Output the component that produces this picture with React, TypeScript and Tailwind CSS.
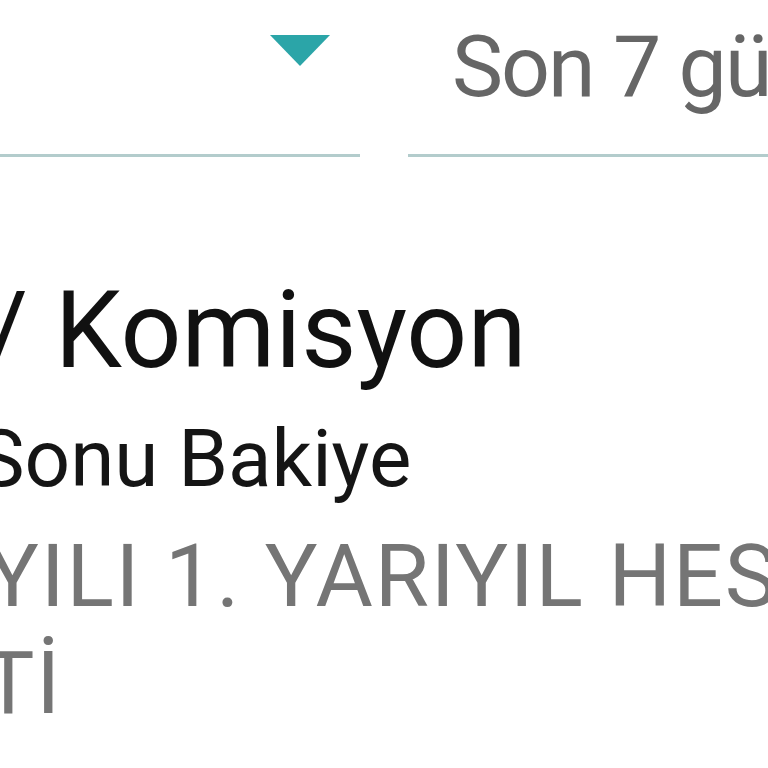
export default function App() {
  return (
    <div className="w-[768px] h-[768px] overflow-hidden bg-white" style={{ fontFamily: "Roboto, 'Noto Sans', sans-serif" }}>
      {/* filter row */}
      <div className="flex gap-[48px] w-[900px]">
        <div className="w-[360px] h-[157px] border-b-[3px] border-[#b3cccc] flex justify-end pr-[30px] pt-[35px]">
          <svg width="60" height="31" viewBox="0 0 60 31">
            <polygon points="0,0 60,0 30,31" fill="#2ba5a8" />
          </svg>
        </div>
        <div className="flex-1 h-[157px] border-b-[3px] border-[#b3cccc] pt-[24px] pl-[44px]">
          <span className="block text-[86px] leading-none tracking-[-2px] text-[#666666] whitespace-nowrap">Son 7 gün</span>
        </div>
      </div>

      <div className="flex flex-col mt-[120px]">
        <div className="ml-[-16px] text-[107px] leading-none text-[#111111] whitespace-nowrap">/ Komisyon</div>
        <div className="ml-[-23px] mt-[35px] text-[80px] leading-none text-[#151515] whitespace-nowrap">Sonu Bakiye</div>
        <div className="mt-[23px] text-[88px] leading-[107px] tracking-[1.8px] text-[#757575] whitespace-nowrap">
          <div className="ml-[-14px]">YILI 1. YARIYIL HESAP</div>
          <div className="ml-[-18px]">Tİ</div>
        </div>
      </div>
    </div>
  );
}
